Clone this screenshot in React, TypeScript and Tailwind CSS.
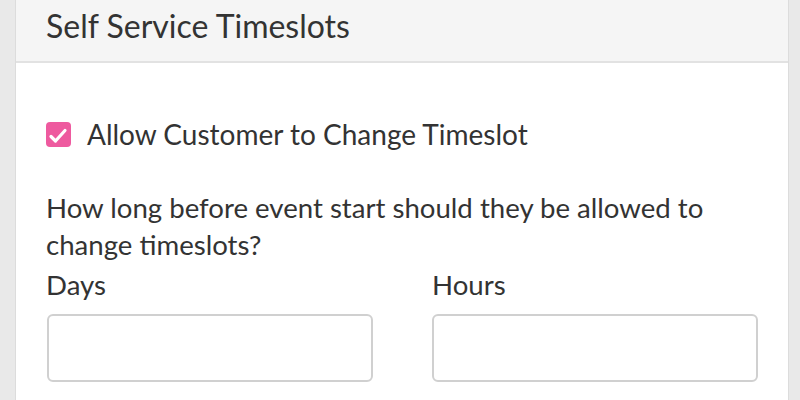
export default function App() {
  return (
    <div className="w-[800px] h-[400px] overflow-hidden bg-[#e9e9e9] pl-[15px] pr-[11px] flex" style={{ fontFamily: "Lato, 'Noto Sans', sans-serif" }}>
      <div className="flex-1 bg-white border-l border-r border-[#dcdcdc] flex flex-col text-[#333]">
        <div className="h-[63px] bg-[#f5f5f5] border-b-2 border-[#e2e2e2] pl-[30px] flex items-center">
          <h2 className="text-[32px] leading-none -mt-[10px]">Self Service Timeslots</h2>
        </div>
        <div className="pl-[30px] pr-[30px] pt-[57px]">
          <label className="flex items-center gap-[16px] h-[28px]">
            <span className="w-[25px] h-[25px] rounded-[4px] bg-[#ee5a9f] shrink-0">
              <svg width="25" height="25" viewBox="0 0 25 25" fill="none">
                <path d="M5 14.5 L9.5 19 L19 8.5" stroke="white" strokeWidth="3.2" strokeLinecap="round" strokeLinejoin="round" />
              </svg>
            </span>
            <span className="text-[28px] leading-none">Allow Customer to Change Timeslot</span>
          </label>
          <p className="text-[27.6px] leading-[37px] mt-[41px]">How long before event start should they be allowed to change timeslots?</p>
          <div className="grid grid-cols-2 gap-[60px] mt-[6px]">
            <div>
              <div className="text-[27.6px] leading-[32px]">Days</div>
              <input className="mt-[13px] w-full h-[68px] border-2 border-[#d0d0d0] rounded-[6px] ml-[1px]" />
            </div>
            <div>
              <div className="text-[27.6px] leading-[32px]">Hours</div>
              <input className="mt-[13px] w-full h-[68px] border-2 border-[#d0d0d0] rounded-[6px]" />
            </div>
          </div>
        </div>
      </div>
    </div>
  );
}
